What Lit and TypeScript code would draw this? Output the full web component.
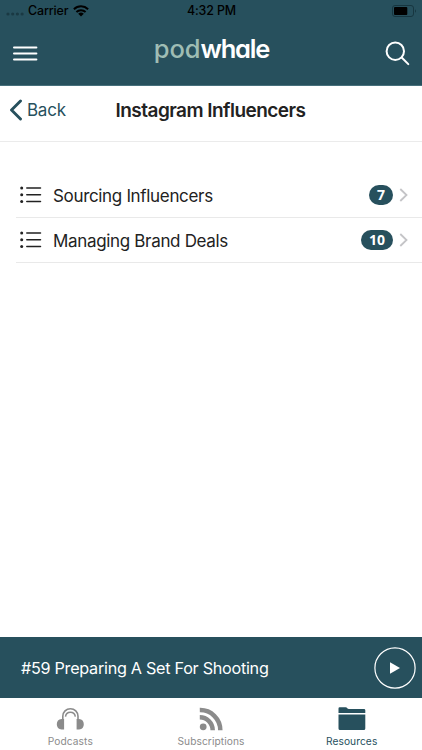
import { LitElement, html, css, svg } from "lit";
import { customElement, state } from "lit/decorators.js";
import { classMap } from "lit/directives/class-map.js";

const rows = [
  { label: "Sourcing Influencers", count: 7 },
  { label: "Managing Brand Deals", count: 10 },
];

const listIcon = html`<svg class="list-icon" width="22" height="18" viewBox="0 0 22 18">
  <g fill="#222"><circle cx="1.7" cy="2" r="1.5" /><circle cx="1.7" cy="8.7" r="1.5" /><circle cx="1.7" cy="15.5" r="1.5" /></g>
  <path d="M6.8 2H20.5M6.8 8.7H20.5M6.8 15.5H20.5" stroke="#222" stroke-width="1.5" stroke-linecap="round" />
</svg>`;

const tabIcons: Record<string, unknown> = {
  Podcasts: svg`<path d="M6.8 12V9.3A7.6 7.6 0 0 1 22 9.3V12" fill="none" stroke="currentColor" stroke-width="1.6"/>
    <path d="M9.5 9.6A4.95 4.95 0 0 1 19.3 9.6" fill="none" stroke="currentColor" stroke-width="1.5"/>
    <path d="M8.1 11.9V22.5H5.6Q.8 22 .8 17.2Q.8 12.4 5.6 11.9ZM20.6 11.9V22.5H23.1Q27.8 22 27.8 17.2Q27.8 12.4 23.1 11.9Z" fill="currentColor"/>`,
  Subscriptions: svg`<circle cx="6.2" cy="19.8" r="3.4" fill="currentColor"/>
    <path d="M2.8 10.3A12.9 12.9 0 0 1 15.7 23.2M2.8 3.1A20.1 20.1 0 0 1 23.3 23.2" fill="none" stroke="currentColor" stroke-width="4.5"/>`,
  Resources: svg`<path d="M.5 6.1V1.5Q.5.3 1.7.3H7.6Q8.7.3 9.3 1.2Q9.8 2 10.9 2H26Q27.3 2 27.3 3.3V6.1ZM.5 7.4H27.3V21.5Q27.3 23 25.8 23H2Q.5 23 .5 21.5Z" fill="currentColor"/>`,
};

@customElement("app-root")
export class AppRoot extends LitElement {
  @state() active = "Resources";

  static styles = css`
    :host {
      display: flex;
      flex-direction: column;
      width: 422px;
      height: 750px;
      overflow: hidden;
      background: #fff;
      color: #222;
      font-family: Inter, "Liberation Sans", sans-serif;
    }
    * { box-sizing: border-box; }
    svg { display: block; flex: none; }
    span, h1 { white-space: nowrap; }
    header { height: 86px; flex: none; background: #27505d; border-bottom: 1px solid #47707c; }
    .status {
      height: 21px;
      display: grid;
      grid-template-columns: 1fr auto 1fr;
      align-items: center;
      padding: 0 5px 0 6px;
      color: #000;
      font-size: 12.4px;
      line-height: 20px;
      font-weight: 500;
    }
    .carrier { display: flex; align-items: center; }
    .dots { margin: 7px 4px 0 0; }
    .carrier-name { letter-spacing: -0.12px; }
    .wifi { margin-left: 5px; }
    .time { letter-spacing: -0.1px; }
    .battery { justify-self: end; }
    .nav { height: 64px; display: grid; grid-template-columns: 1fr auto 1fr; align-items: center; padding: 0 12px 0 13px; }
    .logo {
      font-family: Inter, sans-serif;
      font-feature-settings: "cv11", "ss03";
      font-size: 25.5px;
      line-height: 30px;
      font-weight: 500;
      color: #9fbdb4;
      letter-spacing: -0.1px;
      margin-top: -9px;
    }
    .logo b { color: #fff; font-weight: 600; letter-spacing: -1.2px; }
    .search { justify-self: end; }
    .titlebar {
      height: 56px;
      flex: none;
      border-bottom: 1px solid #ebebeb;
      display: grid;
      grid-template-columns: 1fr auto 1fr;
      align-items: center;
      padding: 0 9px 7px 8px;
    }
    .back { display: flex; align-items: center; gap: 5px; color: #27505d; font-size: 17px; line-height: 22px; letter-spacing: -0.25px; margin-top: -1px; }
    h1 { margin: 2px 0 0; font-size: 19px; line-height: 24px; font-weight: 600; letter-spacing: -0.53px; }
    main { flex: 1; padding-top: 31px; }
    .row {
      height: 45px;
      margin-left: 16px;
      padding: 0 14px 0 4px;
      border-bottom: 1px solid #e9e9e9;
      display: flex;
      align-items: center;
    }
    .label { margin: 1px 0 0 11px; flex: 1; font-size: 17px; line-height: 24px; letter-spacing: -0.33px; }
    .badge {
      height: 20px;
      min-width: 24px;
      padding: 0 8px;
      border-radius: 10px;
      background: #27505d;
      color: #fff;
      text-align: center;
      font-family: "Noto Sans", "Open Sans", sans-serif;
      font-size: 14px;
      line-height: 19.5px;
      font-weight: 700;
      margin-right: 6px;
    }
    .player {
      height: 61px;
      flex: none;
      background: #27505d;
      display: flex;
      align-items: center;
      justify-content: space-between;
      padding: 0 6px 0 21px;
      color: #fff;
      font-size: 16.2px;
    }
    .episode { letter-spacing: -0.28px; }
    .tabs { height: 52px; flex: none; display: grid; grid-template-columns: repeat(3, 1fr); }
    .tab { display: flex; flex-direction: column; align-items: center; padding-top: 9px; color: #8b8b8b; font-size: 10.2px; line-height: 14px; letter-spacing: 0.08px; gap: 3px; }
    .tab.active { color: #27505d; }
  `;

  render() {
    return html`
      <header>
        <div class="status">
          <div class="carrier">
            <svg class="dots" width="18" height="4" viewBox="0 0 18 4"><g fill="#1a3943"><circle cx="2" cy="2" r="1.6"/><circle cx="6.7" cy="2" r="1.6"/><circle cx="11.4" cy="2" r="1.6"/><circle cx="16.1" cy="2" r="1.6"/></g></svg>
            <span class="carrier-name">Carrier</span>
            <svg class="wifi" width="16" height="12" viewBox="0 0 16 12"><path d="M.9 4.2A10.3 10.3 0 0 1 15.1 4.2M3.4 7A6.7 6.7 0 0 1 12.6 7" fill="none" stroke="#000" stroke-width="2"/><path d="M8 11.6L5.2 8.8A4 4 0 0 1 10.8 8.8Z"/></svg>
          </div>
          <span class="time">4:32 PM</span>
          <svg class="battery" width="25" height="12" viewBox="0 0 25 12"><rect x=".5" y=".5" width="21" height="11" rx="2.5" fill="none" stroke="#173640"/><rect x="2" y="2" width="13.3" height="8" rx="1"/><path d="M23 4.2Q25 6 23 7.8Z" fill="#173640"/></svg>
        </div>
        <div class="nav">
          <svg width="25" height="16" viewBox="0 0 25 16"><path d="M1 2.5H23.4M1 8.5H23.4M1 14.5H23.4" stroke="#fff" stroke-width="2" stroke-linecap="round"/></svg>
          <span class="logo">pod<b>whale</b></span>
          <svg class="search" width="25" height="25" viewBox="0 0 25 25"><g fill="none" stroke="#fff" stroke-width="2" stroke-linecap="round"><circle cx="10.3" cy="10.2" r="8.7"/><path d="M16.7 16.5L23.3 23.1"/></g></svg>
        </div>
      </header>
      <div class="titlebar">
        <div class="back">
          <svg width="14" height="22" viewBox="0 0 14 22"><path d="M12.5 2L3.5 11L12.5 20" fill="none" stroke="#27505d" stroke-width="2.9" stroke-linecap="round" stroke-linejoin="round"/></svg>
          <span>Back</span>
        </div>
        <h1>Instagram Influencers</h1>
      </div>
      <main>
        ${rows.map((r) => html`<div class="row">
          ${listIcon}
          <span class="label">${r.label}</span>
          <span class="badge">${r.count}</span>
          <svg width="9" height="14" viewBox="0 0 9 14"><path d="M1.3 1L7.5 7L1.3 13" fill="none" stroke="#c4c4c7" stroke-width="1.8"/></svg>
        </div>`)}
      </main>
      <div class="player">
        <span class="episode">#59 Preparing A Set For Shooting</span>
        <svg width="42" height="42" viewBox="0 0 42 42"><circle cx="21" cy="21" r="20.1" fill="none" stroke="#fff" stroke-width="1.2"/><path d="M16 15.2L26 21L16 26.8Z" fill="#fff"/></svg>
      </div>
      <nav class="tabs">
        ${Object.entries(tabIcons).map(([name, icon]) => html`<div class=${classMap({ tab: true, active: name === this.active })} @click=${() => (this.active = name)}>
          <svg width="28" height="24" viewBox="0 0 28 24">${icon}</svg>
          <span>${name}</span>
        </div>`)}
      </nav>`;
  }
}
